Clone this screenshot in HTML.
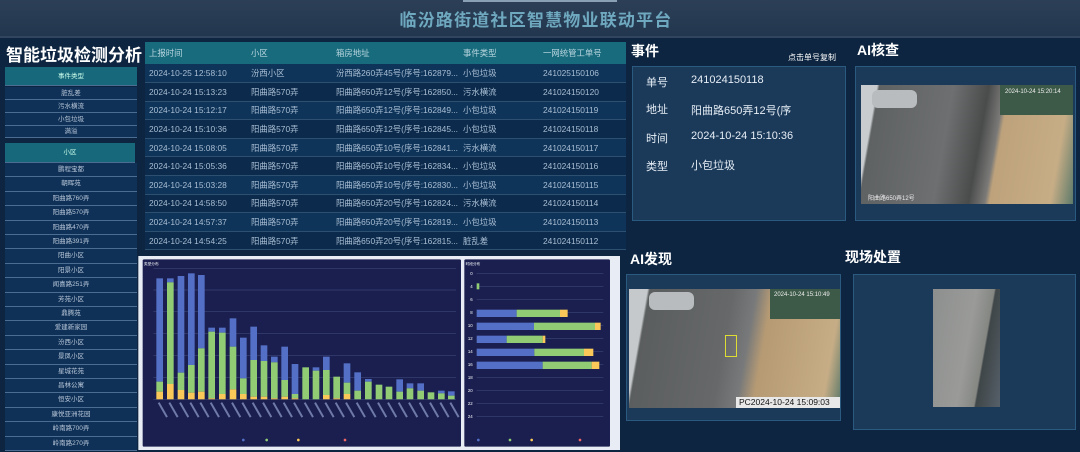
<!DOCTYPE html>
<html><head><meta charset="utf-8">
<style>
*{margin:0;padding:0;box-sizing:border-box}
body{width:1080px;height:452px;overflow:hidden;background:#0d2540;font-family:"Liberation Sans","Noto Sans CJK SC",sans-serif;position:relative;color:#c8d6e6}
.a{position:absolute}
#hdr{left:0;top:0;width:1080px;height:38px;background:linear-gradient(#2c3f56,#22374f);border-bottom:2px solid #31465e}
#ttl{left:0;width:1072px;top:6px;text-align:center;font-size:17px;font-weight:bold;color:#6fa9c0;letter-spacing:1.2px}
.h1{font-weight:bold;color:#fff;font-size:17px}
.li{position:absolute;left:5px;width:132px;font-size:6.5px;text-align:center;color:#b8c6d8;background:#0f3157;border-bottom:1px solid #4a6d91}
.lh{background:#17687a;color:#cfe}
table{border-collapse:collapse;font-size:8.4px;color:#a9bed4}
td,th{height:18.6px;text-align:left;font-weight:normal;white-space:nowrap;border-bottom:1px solid #2d5070}
th{background:#186b7c;color:#b9d6e0;height:22px;border:none}
tr.o td{background:#0f3459}tr.e td{background:#0c2a4b}
.box{background:#1b3959;border:1px solid #2a5a80}
.lbl{font-size:11px;color:#e6eef6}
</style></head><body>
<div id="hdr" class="a"></div>
<div id="ttl" class="a">临汾路街道社区智慧物业联动平台</div>
<div class="a" style="left:463px;top:0;width:154px;height:2px;background:#8aa0b5"></div>

<div class="a h1" style="left:6px;top:41px;font-size:17px">智能垃圾检测分析</div>
<div class="li lh" style="top:67px;height:19px;line-height:19px">事件类型</div>
<div class="li" style="top:87px;height:13px;line-height:13px">脏乱差</div>
<div class="li" style="top:100px;height:13px;line-height:13px">污水横流</div>
<div class="li" style="top:113px;height:13px;line-height:13px">小包垃圾</div>
<div class="li" style="top:126px;height:12px;line-height:12px">满溢</div>
<div class="li lh" style="top:143px;height:20px;line-height:20px;width:130px">小区</div>
<div class="li" style="top:163px;height:14.4px;line-height:14px">鹏程宝都</div>
<div class="li" style="top:177.4px;height:14.4px;line-height:14px">朝晖苑</div>
<div class="li" style="top:191.8px;height:14.4px;line-height:14px">阳曲路760弄</div>
<div class="li" style="top:206.2px;height:14.4px;line-height:14px">阳曲路570弄</div>
<div class="li" style="top:220.6px;height:14.4px;line-height:14px">阳曲路470弄</div>
<div class="li" style="top:235px;height:14.4px;line-height:14px">阳曲路391弄</div>
<div class="li" style="top:249.4px;height:14.4px;line-height:14px">阳曲小区</div>
<div class="li" style="top:263.8px;height:14.4px;line-height:14px">阳景小区</div>
<div class="li" style="top:278.2px;height:14.4px;line-height:14px">闻喜路251弄</div>
<div class="li" style="top:292.6px;height:14.4px;line-height:14px">芳苑小区</div>
<div class="li" style="top:307px;height:14.4px;line-height:14px">鼎腾苑</div>
<div class="li" style="top:321.4px;height:14.4px;line-height:14px">爱建新家园</div>
<div class="li" style="top:335.8px;height:14.4px;line-height:14px">汾西小区</div>
<div class="li" style="top:350.2px;height:14.4px;line-height:14px">景凤小区</div>
<div class="li" style="top:364.6px;height:14.4px;line-height:14px">星城花苑</div>
<div class="li" style="top:379px;height:14.4px;line-height:14px">昌林公寓</div>
<div class="li" style="top:393.4px;height:14.4px;line-height:14px">恒安小区</div>
<div class="li" style="top:407.8px;height:14.4px;line-height:14px">康悦亚洲花园</div>
<div class="li" style="top:422.2px;height:14.4px;line-height:14px">岭南路700弄</div>
<div class="li" style="top:436.6px;height:14.4px;line-height:14px">岭南路270弄</div>

<table class="a" style="left:145px;top:42px;width:481px">
<tr><th style="padding-left:4px;width:106px">上报时间</th><th style="width:85px">小区</th><th style="width:127px">箱房地址</th><th style="width:80px">事件类型</th><th>一网统管工单号</th></tr>
<tr class="o"><td style="padding-left:4px">2024-10-25 12:58:10</td><td>汾西小区</td><td>汾西路260弄45号(序号:162879...</td><td>小包垃圾</td><td>241025150106</td></tr>
<tr class="e"><td style="padding-left:4px">2024-10-24 15:13:23</td><td>阳曲路570弄</td><td>阳曲路650弄12号(序号:162850...</td><td>污水横流</td><td>241024150120</td></tr>
<tr class="o"><td style="padding-left:4px">2024-10-24 15:12:17</td><td>阳曲路570弄</td><td>阳曲路650弄12号(序号:162849...</td><td>小包垃圾</td><td>241024150119</td></tr>
<tr class="e"><td style="padding-left:4px">2024-10-24 15:10:36</td><td>阳曲路570弄</td><td>阳曲路650弄12号(序号:162845...</td><td>小包垃圾</td><td>241024150118</td></tr>
<tr class="o"><td style="padding-left:4px">2024-10-24 15:08:05</td><td>阳曲路570弄</td><td>阳曲路650弄10号(序号:162841...</td><td>污水横流</td><td>241024150117</td></tr>
<tr class="e"><td style="padding-left:4px">2024-10-24 15:05:36</td><td>阳曲路570弄</td><td>阳曲路650弄10号(序号:162834...</td><td>小包垃圾</td><td>241024150116</td></tr>
<tr class="o"><td style="padding-left:4px">2024-10-24 15:03:28</td><td>阳曲路570弄</td><td>阳曲路650弄10号(序号:162830...</td><td>小包垃圾</td><td>241024150115</td></tr>
<tr class="e"><td style="padding-left:4px">2024-10-24 14:58:50</td><td>阳曲路570弄</td><td>阳曲路650弄20号(序号:162824...</td><td>污水横流</td><td>241024150114</td></tr>
<tr class="o"><td style="padding-left:4px">2024-10-24 14:57:37</td><td>阳曲路570弄</td><td>阳曲路650弄20号(序号:162819...</td><td>小包垃圾</td><td>241024150113</td></tr>
<tr class="e"><td style="padding-left:4px">2024-10-24 14:54:25</td><td>阳曲路570弄</td><td>阳曲路650弄20号(序号:162815...</td><td>脏乱差</td><td>241024150112</td></tr>
</table>

<svg class="a" style="left:0;top:0" width="1080" height="452">
<g transform="translate(130,250) scale(0.33333)">
<rect x="25" y="18" width="1445" height="582" fill="#e8ecf4"/>
<rect x="38" y="28" width="955" height="562" fill="#1a1f4f" rx="4"/>
<rect x="1003" y="28" width="437" height="562" fill="#1a1f4f" rx="4"/>
<text x="42" y="45" fill="#fff" font-size="11">类型分布</text>
<text x="1007" y="45" fill="#fff" font-size="11">时段分布</text>
<g stroke="#3c4478" stroke-width="2">
<line x1="70" x2="978" y1="55" y2="55"/><line x1="70" x2="978" y1="120" y2="120"/><line x1="70" x2="978" y1="185" y2="185"/><line x1="70" x2="978" y1="250" y2="250"/><line x1="70" x2="978" y1="316" y2="316"/><line x1="70" x2="978" y1="383" y2="383"/><line x1="70" x2="978" y1="448" y2="448"/>
<line x1="1040" x2="1420" y1="70" y2="70"/><line x1="1040" x2="1420" y1="109" y2="109"/><line x1="1040" x2="1420" y1="148" y2="148"/><line x1="1040" x2="1420" y1="187" y2="187"/><line x1="1040" x2="1420" y1="226" y2="226"/><line x1="1040" x2="1420" y1="265" y2="265"/><line x1="1040" x2="1420" y1="304" y2="304"/><line x1="1040" x2="1420" y1="343" y2="343"/><line x1="1040" x2="1420" y1="382" y2="382"/><line x1="1040" x2="1420" y1="421" y2="421"/><line x1="1040" x2="1420" y1="460" y2="460"/><line x1="1040" x2="1420" y1="499" y2="499"/>
</g>
<g id="bars"></g>
<g fill="#fff" font-size="13" text-anchor="end">
<text x="1028" y="75">0</text><text x="1028" y="114">4</text><text x="1028" y="153">6</text><text x="1028" y="192">8</text><text x="1028" y="231">10</text><text x="1028" y="270">12</text><text x="1028" y="309">14</text><text x="1028" y="348">16</text><text x="1028" y="387">18</text><text x="1028" y="426">20</text><text x="1028" y="465">22</text><text x="1028" y="504">24</text>
</g>
<rect x="1040" y="179" width="120" height="22" fill="#5470c6"/><rect x="1160" y="179" width="130" height="22" fill="#91cc75"/><rect x="1290" y="179" width="23" height="22" fill="#fac858"/>
<rect x="1040" y="218" width="172" height="22" fill="#5470c6"/><rect x="1212" y="218" width="183" height="22" fill="#91cc75"/><rect x="1395" y="218" width="17" height="22" fill="#fac858"/>
<rect x="1040" y="257" width="90" height="22" fill="#5470c6"/><rect x="1130" y="257" width="108" height="22" fill="#91cc75"/><rect x="1238" y="257" width="8" height="22" fill="#fac858"/>
<rect x="1040" y="296" width="173" height="22" fill="#5470c6"/><rect x="1213" y="296" width="149" height="22" fill="#91cc75"/><rect x="1362" y="296" width="28" height="22" fill="#fac858"/>
<rect x="1040" y="335" width="198" height="22" fill="#5470c6"/><rect x="1238" y="335" width="147" height="22" fill="#91cc75"/><rect x="1385" y="335" width="23" height="22" fill="#fac858"/>
<rect x="1040" y="100" width="8" height="18" fill="#91cc75"/>
<g fill="#ccc" font-size="12"><circle cx="340" cy="570" r="4" fill="#5470c6"/><circle cx="410" cy="570" r="4" fill="#91cc75"/><circle cx="505" cy="570" r="4" fill="#fac858"/><circle cx="645" cy="570" r="4" fill="#ee6666"/>
<circle cx="1045" cy="570" r="4" fill="#5470c6"/><circle cx="1140" cy="570" r="4" fill="#91cc75"/><circle cx="1205" cy="570" r="4" fill="#fac858"/><circle cx="1350" cy="570" r="4" fill="#ee6666"/></g>
</g>
</svg>

<div class="a lbl" style="left:631px;top:41px;font-size:14px;font-weight:bold;color:#fff">事件</div>
<div class="a" style="left:788px;top:52px;font-size:8px;color:#fff">点击单号复制</div>
<div class="a box" style="left:632px;top:66px;width:214px;height:155px"></div>
<div class="a lbl" style="left:646px;top:74px">单号</div><div class="a lbl" style="left:691px;top:74px">241024150118</div>
<div class="a lbl" style="left:646px;top:101px">地址</div><div class="a lbl" style="left:691px;top:102px">阳曲路650弄12号(序</div>
<div class="a lbl" style="left:646px;top:130px">时间</div><div class="a lbl" style="left:691px;top:130px">2024-10-24 15:10:36</div>
<div class="a lbl" style="left:646px;top:158px">类型</div><div class="a lbl" style="left:691px;top:157px">小包垃圾</div>

<div class="a" style="left:857px;top:40px;font-size:14px;font-weight:bold;color:#fff">AI核查</div>
<div class="a box" style="left:855px;top:66px;width:221px;height:155px"></div>
<div class="a" style="left:861px;top:85px;width:212px;height:119px;background:linear-gradient(100deg,#c9ccce 0,#c9ccce 7%,#5f6263 8%,#6d6f70 40%,#4a4c4c 55%,#7b7a78 62%,#bda27c 64%,#c7ad86 90%,#5d7a6a 100%)"></div>
<div class="a" style="left:1000px;top:85px;width:73px;height:30px;background:#3d5a48"></div>
<div class="a" style="left:872px;top:90px;width:45px;height:18px;background:#b9bcbe;border-radius:6px"></div>
<div class="a" style="left:1005px;top:89px;font-size:6px;color:#eee">2024-10-24 15:20:14</div>
<div class="a" style="left:868px;top:193px;font-size:6px;color:#eee">阳曲路650弄12号</div>

<div class="a" style="left:630px;top:249px;font-size:14px;font-weight:bold;color:#fff">AI发现</div>
<div class="a box" style="left:626px;top:274px;width:215px;height:147px"></div>
<div class="a" style="left:629px;top:289px;width:211px;height:119px;background:linear-gradient(100deg,#c6c9cb 0,#c6c9cb 8%,#5b5e5f 9%,#666869 45%,#77797a 55%,#b59a74 62%,#c7ad86 92%,#5d7a6a 100%)"></div>
<div class="a" style="left:770px;top:289px;width:70px;height:30px;background:#3d5a48"></div>
<div class="a" style="left:649px;top:292px;width:45px;height:18px;background:#b9bcbe;border-radius:6px"></div>
<div class="a" style="left:736px;top:397px;width:104px;height:11px;background:#e8e8e8;font-size:8.5px;color:#111;line-height:11px;padding-left:3px">PC2024-10-24 15:09:03</div>
<div class="a" style="left:774px;top:292px;font-size:6px;color:#eee">2024-10-24 15:10:49</div>
<div class="a" style="left:725px;top:335px;width:12px;height:22px;border:1px solid #dd3;"></div>

<div class="a" style="left:845px;top:247px;font-size:14px;font-weight:bold;color:#fff">现场处置</div>
<div class="a box" style="left:853px;top:274px;width:223px;height:156px"></div>
<div class="a" style="left:933px;top:289px;width:67px;height:118px;background:linear-gradient(100deg,#8d8f8e 0,#9a9b99 50%,#858783 70%,#3f4648 72%,#56606a 100%)"></div>
<script>
var d=[[88,85,395,425],[120,85,97,402],[152,78,368,420],[183,70,345,428],[213,75,295,425],[244,233,245,445],[276,233,248,432],[308,205,290,418],[339,263,385,432],[370,230,330,440],[401,286,333,440],[432,320,337,445],[463,290,390,440],[494,342,432,445],[526,352,352,448],[557,352,362,448],[588,320,360,435],[619,380,380,445],[650,340,398,432],[682,367,422,448],[714,387,395,448],[746,404,404,448],[776,410,410,448],[808,388,425,448],[839,400,415,448],[871,400,422,448],[902,427,427,448],[933,422,430,448],[963,424,437,448]];
var s='';d.forEach(function(b){var x=b[0]-9,w=20;s+='<rect x="'+x+'" y="'+b[1]+'" width="'+w+'" height="'+(b[2]-b[1])+'" fill="#5470c6"/><rect x="'+x+'" y="'+b[2]+'" width="'+w+'" height="'+(b[3]-b[2])+'" fill="#91cc75"/><rect x="'+x+'" y="'+b[3]+'" width="'+w+'" height="'+(448-b[3])+'" fill="#fac858"/><rect x="'+(x+4)+'" y="458" width="6" height="50" fill="#6f7aa8" transform="rotate(-30 '+(x+7)+' 458)"/>';});
document.getElementById('bars').innerHTML=s;
</script>
</body></html>
